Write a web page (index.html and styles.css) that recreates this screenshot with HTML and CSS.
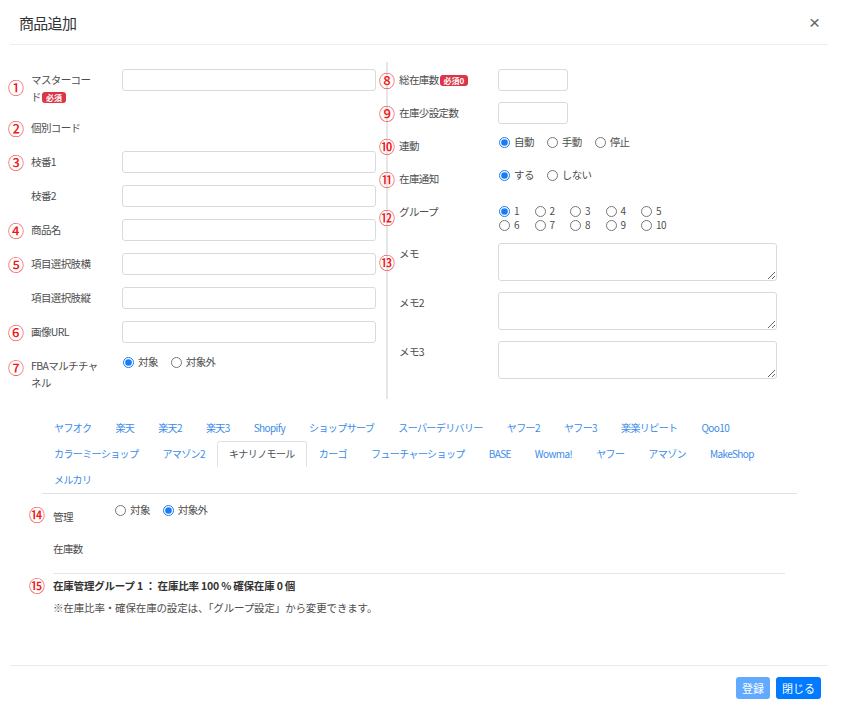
FILE: index.html
```html
<!DOCTYPE html>
<html lang="ja">
<head>
    <meta charset="UTF-8">
    <meta name="viewport" content="width=device-width, initial-scale=1.0">
    <title>商品追加</title>
    <link rel="stylesheet" href="styles.css">
</head>
<body>
<div class="modal">
    <div class="modal-header">
        <h5 class="modal-title">商品追加</h5>
        <button type="button" class="close">×</button>
    </div>

    <div class="modal-body">
        <div class="cols">
            <!-- 左列 -->
            <div class="col col-left">
                <div class="row">
                    <span class="num">①</span>
                    <label class="label">マスターコー<span class="nowrap">ド<span class="badge">必須</span></span></label>
                    <div class="field"><input type="text" class="form-control"></div>
                </div>
                <div class="row">
                    <span class="num">②</span>
                    <label class="label">個別コード</label>
                    <div class="field"></div>
                </div>
                <div class="row">
                    <span class="num">③</span>
                    <label class="label">枝番1</label>
                    <div class="field"><input type="text" class="form-control"></div>
                </div>
                <div class="row">
                    <span class="num"></span>
                    <label class="label">枝番2</label>
                    <div class="field"><input type="text" class="form-control"></div>
                </div>
                <div class="row">
                    <span class="num">④</span>
                    <label class="label">商品名</label>
                    <div class="field"><input type="text" class="form-control"></div>
                </div>
                <div class="row">
                    <span class="num">⑤</span>
                    <label class="label">項目選択肢横</label>
                    <div class="field"><input type="text" class="form-control"></div>
                </div>
                <div class="row">
                    <span class="num"></span>
                    <label class="label">項目選択肢縦</label>
                    <div class="field"><input type="text" class="form-control"></div>
                </div>
                <div class="row">
                    <span class="num">⑥</span>
                    <label class="label">画像URL</label>
                    <div class="field"><input type="text" class="form-control"></div>
                </div>
                <div class="row">
                    <span class="num top">⑦</span>
                    <label class="label">FBAマルチチャネル</label>
                    <div class="field radios">
                        <label class="radio"><input type="radio" name="fba" checked>対象</label>
                        <label class="radio"><input type="radio" name="fba">対象外</label>
                    </div>
                </div>
            </div>

            <!-- 右列 -->
            <div class="col col-right">
                <div class="row">
                    <span class="num">⑧</span>
                    <label class="label">総在庫数<span class="badge">必須0</span></label>
                    <div class="field"><input type="text" class="form-control short"></div>
                </div>
                <div class="row">
                    <span class="num">⑨</span>
                    <label class="label">在庫少設定数</label>
                    <div class="field"><input type="text" class="form-control short"></div>
                </div>
                <div class="row">
                    <span class="num">⑩</span>
                    <label class="label">連動</label>
                    <div class="field radios">
                        <label class="radio"><input type="radio" name="link" checked>自動</label>
                        <label class="radio"><input type="radio" name="link">手動</label>
                        <label class="radio"><input type="radio" name="link">停止</label>
                    </div>
                </div>
                <div class="row">
                    <span class="num">⑪</span>
                    <label class="label">在庫通知</label>
                    <div class="field radios">
                        <label class="radio"><input type="radio" name="notify" checked>する</label>
                        <label class="radio"><input type="radio" name="notify">しない</label>
                    </div>
                </div>
                <div class="row">
                    <span class="num">⑫</span>
                    <label class="label">グループ</label>
                    <div class="field radio-grid">
                        <label class="radio"><input type="radio" name="group" checked>1</label>
                        <label class="radio"><input type="radio" name="group">2</label>
                        <label class="radio"><input type="radio" name="group">3</label>
                        <label class="radio"><input type="radio" name="group">4</label>
                        <label class="radio"><input type="radio" name="group">5</label>
                        <label class="radio"><input type="radio" name="group">6</label>
                        <label class="radio"><input type="radio" name="group">7</label>
                        <label class="radio"><input type="radio" name="group">8</label>
                        <label class="radio"><input type="radio" name="group">9</label>
                        <label class="radio"><input type="radio" name="group">10</label>
                    </div>
                </div>
                <div class="row">
                    <span class="num">⑬</span>
                    <label class="label">メモ</label>
                    <div class="field"><textarea class="form-control"></textarea></div>
                </div>
                <div class="row">
                    <span class="num"></span>
                    <label class="label">メモ2</label>
                    <div class="field"><textarea class="form-control"></textarea></div>
                </div>
                <div class="row">
                    <span class="num"></span>
                    <label class="label">メモ3</label>
                    <div class="field"><textarea class="form-control"></textarea></div>
                </div>
            </div>
        </div>

        <!-- モール別タブ -->
        <ul class="nav-tabs">
            <li><a class="nav-link" href="#">ヤフオク</a></li>
            <li><a class="nav-link" href="#">楽天</a></li>
            <li><a class="nav-link" href="#">楽天2</a></li>
            <li><a class="nav-link" href="#">楽天3</a></li>
            <li><a class="nav-link" href="#">Shopify</a></li>
            <li><a class="nav-link" href="#">ショップサーブ</a></li>
            <li><a class="nav-link" href="#">スーパーデリバリー</a></li>
            <li><a class="nav-link" href="#">ヤフー2</a></li>
            <li><a class="nav-link" href="#">ヤフー3</a></li>
            <li><a class="nav-link" href="#">楽楽リピート</a></li>
            <li><a class="nav-link" href="#">Qoo10</a></li>
            <li><a class="nav-link" href="#">カラーミーショップ</a></li>
            <li><a class="nav-link" href="#">アマゾン2</a></li>
            <li><a class="nav-link active" href="#">キナリノモール</a></li>
            <li><a class="nav-link" href="#">カーゴ</a></li>
            <li><a class="nav-link" href="#">フューチャーショップ</a></li>
            <li><a class="nav-link" href="#">BASE</a></li>
            <li><a class="nav-link" href="#">Wowma!</a></li>
            <li><a class="nav-link" href="#">ヤフー</a></li>
            <li><a class="nav-link" href="#">アマゾン</a></li>
            <li><a class="nav-link" href="#">MakeShop</a></li>
            <li><a class="nav-link" href="#">メルカリ</a></li>
        </ul>

        <div class="tab-pane">
            <div class="pane-row">
                <span class="num">⑭</span>
                <label class="label">管理</label>
                <div class="radios">
                    <label class="radio"><input type="radio" name="manage">対象</label>
                    <label class="radio"><input type="radio" name="manage" checked>対象外</label>
                </div>
            </div>
            <div class="pane-row stock">
                <span class="num"></span>
                <label class="label">在庫数</label>
            </div>
            <hr class="sep">
            <div class="pane-row group-info">
                <span class="num">⑮</span>
                <div>
                    <p class="info-title">在庫管理グループ 1 ： 在庫比率 100 % 確保在庫 0 個</p>
                    <p class="info-note">※在庫比率・確保在庫の設定は、「グループ設定」から変更できます。</p>
                </div>
            </div>
        </div>
    </div>

    <div class="modal-footer">
        <button type="button" class="btn btn-disabled">登録</button>
        <button type="button" class="btn">閉じる</button>
    </div>
</div>
</body>
</html>
```

FILE: styles.css
```css
body {
    margin: 0;
    font-family: "Noto Sans CJK JP", "Noto Sans", sans-serif;
    font-size: 10.5px;
    letter-spacing: -0.6px;
    color: #4d4d4d;
    background: #fff;
}

/* ヘッダー */
.modal-header {
    display: flex;
    align-items: center;
    justify-content: space-between;
    height: 44px;
    margin: 0 15px 0 10px;
    padding: 0 8px 0 9px;
    border-bottom: 1px solid #eceeef;
}
.modal-title {
    margin: 0;
    font-size: 15px;
    font-weight: normal;
    letter-spacing: -0.7px;
    color: #333;
}
.close {
    border: none;
    background: none;
    padding: 0;
    font-family: "Liberation Sans", sans-serif;
    font-size: 19px;
    line-height: 1;
    color: #666;
}

/* 2列フォーム */
.cols {
    display: flex;
    margin-top: 17px;
}
.col-left {
    width: 386px;
    box-sizing: border-box;
    padding: 7px 10px 8px 8px;
}
.col-right {
    flex: 1;
    border-left: 2px solid #e6e6e6;
    padding: 7px 66px 8px 0;
}
.row {
    display: flex;
    align-items: flex-start;
    min-height: 22px;
    margin-bottom: 12px;
}
.col-right .row {
    margin-bottom: 11px;
}
.row:last-child {
    margin-bottom: 0;
}
.num {
    width: 23px;
    flex-shrink: 0;
    align-self: center;
    font-size: 16px;
    font-weight: 500;
    line-height: 16px;
    letter-spacing: 0;
    color: #f01818;
}
.num.top {
    align-self: flex-start;
    margin-top: 4px;
}
.col-right .num {
    width: 20px;
    margin-left: -9px;
}
.label {
    width: 91px;
    flex-shrink: 0;
    box-sizing: border-box;
    padding: 2px 18px 0 0;
    line-height: 17px;
}
.col-right .label {
    width: 99px;
    padding-right: 8px;
}
.nowrap {
    white-space: nowrap;
}
.badge {
    display: inline-block;
    margin-left: 1px;
    padding: 1px 4px;
    border-radius: 3px;
    background: #dc3545;
    color: #fff;
    font-size: 8px;
    font-weight: bold;
    line-height: 9px;
    letter-spacing: 0;
    vertical-align: 0;
}
.field {
    flex: 1;
}
.form-control {
    display: block;
    width: 100%;
    height: 22px;
    box-sizing: border-box;
    margin: 0;
    padding: 2px 6px;
    border: 1px solid #d6dbe0;
    border-radius: 3px;
    font: inherit;
}
.form-control.short {
    width: 70px;
}
textarea.form-control {
    height: 38px;
    resize: vertical;
}

/* ラジオ */
.radios {
    display: flex;
    padding-left: 1px;
    line-height: 14px;
}
.radio {
    display: inline-flex;
    align-items: center;
    margin-right: 13px;
}
.radio input {
    width: 11px;
    height: 11px;
    margin: 0 4px 0 0;
    accent-color: #1a7cf5;
}
.radio-grid {
    display: grid;
    grid-template-columns: repeat(5, 35.5px);
    padding: 3px 0 0 1px;
    font-size: 10px;
    line-height: 14px;
}

/* タブ */
.nav-tabs {
    display: flex;
    flex-wrap: wrap;
    list-style: none;
    margin: 16px 46px 0 42px;
    padding: 0;
    font-size: 10px;
    border-bottom: 1px solid #dee2e6;
}
.nav-link {
    display: block;
    padding: 4px 11px;
    line-height: 16px;
    border: 1px solid transparent;
    border-radius: 3px 3px 0 0;
    color: #3b8be8;
    text-decoration: none;
}
.nav-link.active {
    color: #495057;
    border-color: #dee2e6 #dee2e6 #fff;
}

/* タブ内容 */
.tab-pane {
    margin: 0 58px 0 29px;
    padding: 9px 0 49px;
}
.pane-row {
    display: flex;
    align-items: flex-start;
}
.tab-pane .num {
    width: 24px;
}
.tab-pane .label {
    width: 63px;
    padding-top: 5px;
}
.tab-pane .radios {
    margin-left: -2px;
}
.pane-row.stock {
    margin-top: 15px;
}
.pane-row.stock .label {
    padding-top: 0;
}
.sep {
    margin: 16px 0 0 24px;
    border: none;
    border-top: 1px solid #e5e5e5;
}
.group-info {
    margin-top: 3px;
}
.group-info .num {
    align-self: flex-start;
}
.info-title {
    margin: 0;
    line-height: 17px;
    font-weight: bold;
    letter-spacing: -0.2px;
    color: #333;
}
.info-note {
    margin: 5px 0 0;
    line-height: 17px;
    letter-spacing: -0.15px;
}

/* フッター */
.modal-footer {
    display: flex;
    justify-content: flex-end;
    gap: 6px;
    margin: 0 15px 0 10px;
    padding: 11px 7px 0;
    border-top: 1px solid #e9ecef;
}
.btn {
    height: 22px;
    padding: 0 6px;
    border: none;
    border-radius: 3px;
    background: #007bff;
    color: #fff;
    font: inherit;
    font-size: 11px;
}
.btn-disabled {
    background: #62aaff;
}
```
